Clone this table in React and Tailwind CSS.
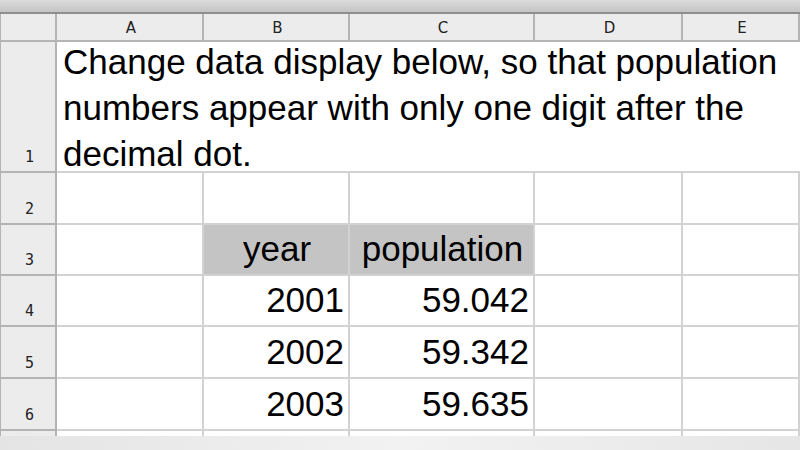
const cols = ["A", "B", "C", "D", "E"];

const rows = [
  { n: 2, b: "", c: "" },
  { n: 3, b: "year", c: "population", head: true },
  { n: 4, b: "2001", c: "59.042" },
  { n: 5, b: "2002", c: "59.342" },
  { n: 6, b: "2003", c: "59.635" },
];

const RowNum = ({ n }) => (
  <div className="bg-[#ececec] border-r-2 border-b-2 border-l border-[#b4b4b4] flex items-end justify-center pl-[3px] pb-[5px] text-[15px] leading-[18px] text-[#222] font-['DejaVu_Sans_Mono',monospace]">
    {n}
  </div>
);

const Cell = ({ children, className = "" }) => (
  <div className={`border-r-2 border-b-2 border-[#d2d2d2] flex items-end pl-[6px] pr-[4px] pb-[5px] text-[35px] leading-[40px] text-black ${className}`}>
    {children}
  </div>
);

export default function App() {
  return (
    <div className="w-[800px] h-[450px] overflow-hidden bg-white flex flex-col font-['Liberation_Sans',Arial,sans-serif]">
      <div className="h-[14px] shrink-0 bg-gradient-to-b from-[#dcdcdc] to-[#c4c4c4] border-b-2 border-[#8e8e8e]" />

      <div className="grid grid-cols-[57px_147px_146px_185px_148px_117px] grid-rows-[28px_131px_52px_51px_51px_52px_52px_5px] shrink-0">
        {/* column headers */}
        <div className="bg-[#ececec] border-r-2 border-b-2 border-l border-[#b4b4b4]" />
        {cols.map((c) => (
          <div
            key={c}
            className="bg-[#ececec] border-r-2 border-b-2 border-[#b4b4b4] flex items-center justify-center pt-[3px] pl-[3px] text-[15px] text-[#222] font-['DejaVu_Sans',sans-serif]"
          >
            {c}
          </div>
        ))}

        {/* row 1 */}
        <RowNum n={1} />
        <div className="col-span-5 border-b-2 border-[#d2d2d2] pl-[6px] overflow-hidden">
          <div className="-mt-[3px] text-[35px] leading-[46px] text-black whitespace-nowrap">
            Change data display below, so that population
            <br />
            numbers appear with only one digit after the
            <br />
            decimal dot.
          </div>
        </div>

        {rows.map((r) => (
          <div key={r.n} className="contents">
            <RowNum n={r.n} />
            <Cell />
            {r.head ? (
              <>
                <Cell className="bg-[#c4c4c4] justify-center">{r.b}</Cell>
                <Cell className="bg-[#c4c4c4] justify-center">{r.c}</Cell>
              </>
            ) : (
              <>
                <Cell className="justify-end">{r.b}</Cell>
                <Cell className="justify-end">{r.c}</Cell>
              </>
            )}
            <Cell />
            <Cell />
          </div>
        ))}

        {/* partial row 7 */}
        <div className="bg-[#ececec] border-r-2 border-l border-[#b4b4b4]" />
        {cols.map((c) => (
          <div key={c} className="border-r-2 border-[#d2d2d2]" />
        ))}
      </div>

      <div className="flex-1 bg-gradient-to-r from-[#e4e4e4] via-[#f2f2f2] to-[#e6e6e6]" />
    </div>
  );
}
